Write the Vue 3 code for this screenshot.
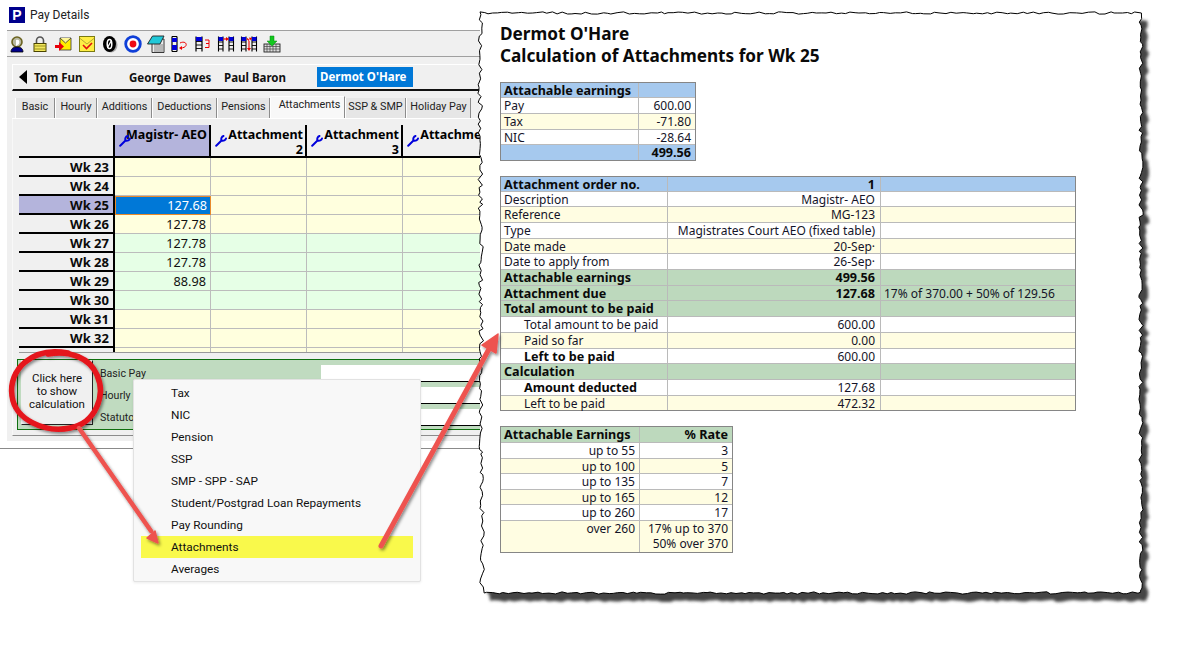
<script setup>
const tabs = ['Basic', 'Hourly', 'Additions', 'Deductions', 'Pensions', 'Attachments', 'SSP & SMP', 'Holiday Pay']
const tabWidths = [40, 42, 55, 65, 53, 75, 61, 65]
const weeks = [
  { w: 'Wk 23', c: 'y', v: '' }, { w: 'Wk 24', c: 'y', v: '' },
  { w: 'Wk 25', c: 'y', v: '127.68', sel: true }, { w: 'Wk 26', c: 'y', v: '127.78' },
  { w: 'Wk 27', c: 'g', v: '127.78' }, { w: 'Wk 28', c: 'g', v: '127.78' },
  { w: 'Wk 29', c: 'g', v: '88.98' }, { w: 'Wk 30', c: 'g', v: '' },
  { w: 'Wk 31', c: 'y', v: '' }, { w: 'Wk 32', c: 'y', v: '' }, { w: '', c: 'y', v: '' }
]
const menu = ['Tax', 'NIC', 'Pension', 'SSP', 'SMP - SPP - SAP', 'Student/Postgrad Loan Repayments', 'Pay Rounding', 'Attachments', 'Averages']

const earn = [
  { k: 'b', a: 'Attachable earnings', b: '', ab: true },
  { k: 'w', a: 'Pay', b: '600.00' },
  { k: 'y', a: 'Tax', b: '-71.80' },
  { k: 'w', a: 'NIC', b: '-28.64' },
  { k: 'b', a: '', b: '499.56', bb: true }
]
const order = [
  { k: 'b', a: 'Attachment order no.', b: '1', c: '', ab: true, bb: true },
  { k: 'w', a: 'Description', b: 'Magistr- AEO', c: '' },
  { k: 'y', a: 'Reference', b: 'MG-123', c: '' },
  { k: 'w', a: 'Type', b: 'Magistrates Court AEO (fixed table)', c: '' },
  { k: 'y', a: 'Date made', b: '20-Sep·', c: '' },
  { k: 'w', a: 'Date to apply from', b: '26-Sep·', c: '' },
  { k: 'g', a: 'Attachable earnings', b: '499.56', c: '', ab: true, bb: true },
  { k: 'g', a: 'Attachment due', b: '127.68', c: '17% of 370.00 + 50% of 129.56', ab: true, bb: true },
  { k: 'g', a: 'Total amount to be paid', b: '', c: '', ab: true },
  { k: 'w', a: 'Total amount to be paid', b: '600.00', c: '', ind: true },
  { k: 'y', a: 'Paid so far', b: '0.00', c: '', ind: true },
  { k: 'w', a: 'Left to be paid', b: '600.00', c: '', ind: true, ab: true },
  { k: 'g', a: 'Calculation', b: '', c: '', ab: true },
  { k: 'w', a: 'Amount deducted', b: '127.68', c: '', ind: true, ab: true },
  { k: 'y', a: 'Left to be paid', b: '472.32', c: '', ind: true }
]
const rates = [
  { k: 'w', a: 'up to 55', b: '3' }, { k: 'y', a: 'up to 100', b: '5' },
  { k: 'w', a: 'up to 135', b: '7' }, { k: 'y', a: 'up to 165', b: '12' },
  { k: 'w', a: 'up to 260', b: '17' }
]

// torn-paper outline of the report sheet
let seed = 11
const rnd = () => { seed = (seed * 16807) % 2147483647; return seed / 2147483647 }
function edge(x0, y0, x1, y1, amp, minStep, pts) {
  const len = Math.hypot(x1 - x0, y1 - y0)
  const ux = (x1 - x0) / len, uy = (y1 - y0) / len
  let d = 0
  while (d < len) {
    const o = (rnd() - 0.5) * amp * 2
    pts.push([x0 + ux * d - uy * o, y0 + uy * d + ux * o])
    d += minStep + rnd() * 4
  }
}
const pts = []
edge(10, 8, 671, 8, 1.1, 3, pts)
edge(671, 8, 671, 588, 2.2, 2, pts)
edge(671, 588, 12, 588, 1.2, 3, pts)
edge(12, 588, 10, 8, 2.4, 2, pts)
const tornPath = 'M' + pts.map(p => p[0].toFixed(1) + ' ' + p[1].toFixed(1)).join('L') + 'Z'
</script>

<template>
  <div class="stage">
    <section class="win">
      <header class="title">
        <span class="app-logo">P</span>
        <span>Pay Details</span>
      </header>

      <div class="toolbar">
        <svg class="tb" viewBox="0 0 18 18"><circle cx="9" cy="7" r="5" fill="#b8b8a0" stroke="#6b6320" stroke-width="1.6"/><path d="M8 5c3-1 4 1 3 4l-3 2z" fill="#fff"/><path d="M3 17c0-4 3-5 6-5s6 1 6 5z" fill="#00008c" stroke="#000" stroke-width=".8"/></svg>
        <svg class="tb" viewBox="0 0 18 18"><path d="M5.500 9V5.500a3.500 3.500 0 0 1 7 0V9" fill="none" stroke="#555" stroke-width="1.6"/><rect x="3" y="8.500" width="12" height="8" fill="#f2e85c" stroke="#4a4400"/><path d="M3 11h12M3 14h12" stroke="#9a9020"/></svg>
        <svg class="tb" viewBox="0 0 18 18"><path d="M6 3h11v12H6z" fill="#ffee00" stroke="#333" stroke-width=".8"/><path d="M6 3l5.500 5L17 3" fill="#fff799" stroke="#333" stroke-width=".8"/><path d="M1 10h4V7l5 4.500-5 4.500v-3H1z" fill="#e8000a"/></svg>
        <svg class="tb" viewBox="0 0 18 18"><rect x="1.500" y="1.500" width="15" height="15" fill="#ffee44" stroke="#7a7a10" stroke-width="1"/><path d="M1.500 3l7.500 6 7.500-6" fill="none" stroke="#b0a030" stroke-width=".9"/><path d="M5 10l3.500 3.500L14 8" fill="none" stroke="#e01010" stroke-width="1.600"/></svg>
        <svg class="tb" viewBox="0 0 18 18"><ellipse cx="10" cy="10" rx="6.500" ry="7.500" fill="#aaa"/><ellipse cx="8.500" cy="9" rx="6.500" ry="8" fill="#000"/><ellipse cx="8.500" cy="9" rx="2.300" ry="4.600" fill="none" stroke="#fff" stroke-width="1.500"/><path d="M6.500 12.500l4-7" stroke="#fff" stroke-width="1.300"/></svg>
        <svg class="tb" viewBox="0 0 18 18"><circle cx="9" cy="9" r="7.300" fill="#fff" stroke="#0f3fd8" stroke-width="2.800"/><circle cx="9" cy="9" r="3.400" fill="#ee0a14"/></svg>
        <svg class="tb" viewBox="0 0 18 18"><path d="M5 4h12v13.500H5z" fill="#eee" stroke="#222" stroke-width=".9"/><path d="M7 10h9M7 12h9M7 14h9M7 16h9" stroke="#666" stroke-width=".8"/><path d="M5.500 1h11.500l-4 8H.5z" fill="#20c8d8" stroke="#222" stroke-width=".9"/></svg>
        <svg class="tb" viewBox="0 0 18 18"><path d="M2 1.500v15M7 1.500v15" stroke="#000" stroke-width="1.200"/><path d="M2 1.500h5M2 16.500h5" stroke="#000"/><path d="M2 3h5v4H2zM2 10h5v5H2z" fill="#0000d8"/><path d="M10 8c4-2 7 0 6 2.500-.5 1.500-3 2.500-5 2.500" fill="none" stroke="#e00" stroke-width="1"/><path d="M9 13l3-2v4z" fill="#e00"/></svg>
        <svg class="tb" viewBox="0 0 18 18"><path d="M2 1.500v15M8 1.500v15" stroke="#000" stroke-width="1.200"/><path d="M2 6.500h6M2 10h6M2 13.500h6" stroke="#000" stroke-width=".9"/><path d="M2 2h6v4H2z" fill="#0000d8"/><path d="M11 5h4v3.500h-3M12 8.500h3v4h-4" fill="none" stroke="#e00" stroke-width="1"/></svg>
        <svg class="tb" viewBox="0 0 18 18"><path d="M1.500 1.500v15M6 1.500v15M12 1.500v15M16.500 1.500v15" stroke="#000" stroke-width="1.100"/><path d="M1.500 7h4.500M1.500 10.500h4.500M1.500 14h4.500M12 7h4.500M12 10.500h4.500M12 14h4.500" stroke="#000" stroke-width=".9"/><path d="M1.500 2h4.500v4H1.500zM12 2h4.500v4H12z" fill="#0000d8"/><path d="M6.500 4H10" stroke="#e00" stroke-width="1.200"/><path d="M12 4L9 2v4z" fill="#e00"/></svg>
        <svg class="tb" viewBox="0 0 18 18"><path d="M1.500 1.500v15M6 1.500v15M12 1.500v15M16.500 1.500v15" stroke="#000" stroke-width="1.100"/><path d="M1.500 7h4.500M1.500 10.500h4.500M1.500 14h4.500M12 7h4.500M12 10.500h4.500M12 14h4.500" stroke="#000" stroke-width=".9"/><path d="M1.500 2h4.500v4H1.500zM12 2h4.500v4H12z" fill="#0000d8"/><path d="M7 3.500l2 2M9 6v8" stroke="#e00" stroke-width="1.100"/><path d="M9 16l-2-3h4zM12 3L9 2.500l1 3z" fill="#e00"/></svg>
        <svg class="tb" viewBox="0 0 18 18"><rect x="1" y="9" width="16" height="8" fill="#ddd" stroke="#222" stroke-width=".9"/><path d="M1 11.500h16M1 14h16M4 9v8M7 9v8M10 9v8M13 9v8" stroke="#444" stroke-width=".7"/><path d="M7 1h4v5h3l-5 5-5-5h3z" fill="#12c81e" stroke="#0a8a10" stroke-width=".5"/></svg>
      </div>

      <div class="body">
        <nav class="people">
          <span class="back"></span>
          <span class="person p1">Tom Fun</span>
          <span class="person p2">George Dawes</span>
          <span class="person p3">Paul Baron</span>
          <span class="person current">Dermot O'Hare</span>
        </nav>

        <div class="tabs">
          <span
            v-for="(t, i) in tabs"
            :key="t"
            class="tab"
            :class="{ active: t === 'Attachments' }"
            :style="{ width: tabWidths[i] + 'px' }"
          >{{ t }}</span>
        </div>

        <div class="panel">
          <div class="grid">
            <div class="row head">
              <div class="lab"></div>
              <div class="hc sel-head"><svg class="wrench" viewBox="0 0 12 12"><path d="M1.200 10.800L6.500 5.500M6.500 5.500C5.800 3.500 6.800 1.500 8.500 1M6.500 5.500C8.500 6.200 10.500 5.200 11 3.500" fill="none" stroke="#0000dc" stroke-width="2" stroke-linecap="round"/></svg><span>Magistr- AEO</span></div>
              <div class="hc" v-for="n in [2, 3, 4]" :key="n"><svg class="wrench" viewBox="0 0 12 12"><path d="M1.200 10.800L6.500 5.500M6.500 5.500C5.800 3.500 6.800 1.500 8.500 1M6.500 5.500C8.500 6.200 10.500 5.200 11 3.500" fill="none" stroke="#0000dc" stroke-width="2" stroke-linecap="round"/></svg><span>Attachment<br>{{ n }}</span></div>
            </div>
            <div class="row" v-for="r in weeks" :key="r.w">
              <div class="lab" :class="{ 'lab-sel': r.sel }">{{ r.w }}</div>
              <div class="cell" :class="[r.c, { selected: r.sel }]">{{ r.v }}</div>
              <div class="cell" :class="r.c" v-for="n in 3" :key="n"></div>
            </div>
          </div>

          <div class="totals">
            <button class="calc">Click here<br>to show<br>calculation</button>
            <div class="tot-rows">
              <div class="tot-row"><span>Basic Pay</span><i></i></div>
              <div class="tot-row"><span>Hourly pay</span><i></i></div>
              <div class="tot-row"><span>Statutory pay</span><i></i></div>
            </div>
          </div>
        </div>
      </div>
    </section>

    <ul class="menu">
      <li v-for="m in menu" :key="m" :class="{ hot: m === 'Attachments' }">{{ m }}</li>
    </ul>

    <article class="paper">
      <svg class="torn" viewBox="0 0 690 610">
        <defs><filter id="blur" x="-5%" y="-5%" width="110%" height="110%"><feGaussianBlur stdDeviation="1.600"/></filter></defs>
        <path :d="tornPath" fill="#444" filter="url(#blur)" transform="translate(6 8)"/>
        <path :d="tornPath" fill="#fff" stroke="#000" stroke-width="1"/>
      </svg>
      <div class="sheet">
        <h1>Dermot O'Hare<br>Calculation of Attachments for Wk 25</h1>

        <div class="rep rep1">
          <template v-for="(r, i) in earn" :key="i">
            <div class="rc" :class="[r.k, { bold: r.ab }]">{{ r.a }}</div>
            <div class="rc num" :class="[r.k, { bold: r.bb }]">{{ r.b }}</div>
          </template>
        </div>

        <div class="rep rep2">
          <template v-for="(r, i) in order" :key="i">
            <div class="rc" :class="[r.k, { bold: r.ab, ind: r.ind }]">{{ r.a }}</div>
            <div class="rc num" :class="[r.k, { bold: r.bb }]">{{ r.b }}</div>
            <div class="rc" :class="r.k">{{ r.c }}</div>
          </template>
        </div>

        <div class="rep rep3">
          <div class="rc g bold">Attachable Earnings</div>
          <div class="rc g bold num">% Rate</div>
          <template v-for="r in rates" :key="r.a">
            <div class="rc num" :class="r.k">{{ r.a }}</div>
            <div class="rc num" :class="r.k">{{ r.b }}</div>
          </template>
          <div class="rc num y">over 260</div>
          <div class="rc num y">17% up to 370<br>50% over 370</div>
        </div>
      </div>
    </article>

    <svg class="marks" viewBox="0 0 1189 653">
      <defs>
        <filter id="sh" x="-20%" y="-20%" width="140%" height="140%"><feDropShadow dx="1.500" dy="2" stdDeviation="1.500" flood-color="#000" flood-opacity=".45"/></filter>
      </defs>
      <g filter="url(#sh)">
        <path d="M68 353C32 346 8 370 12 396C15 420 45 433 70 428C96 423 106 395 97 375C90 358 70 350 48 354" fill="none" stroke="#e5141c" stroke-width="5.500" stroke-linecap="round"/>
        <path d="M79 428L151 531" stroke="#ee5350" stroke-width="4.500" stroke-linecap="round"/>
        <path d="M158 543L147 538L155 531Z" fill="#ee5350" stroke="#ee5350" stroke-width="1.500" stroke-linejoin="round"/>
        <path d="M381 546L489 349" stroke="#ee5350" stroke-width="5" stroke-linecap="round"/>
        <path d="M498 334L482 345L496 353Z" fill="#ee5350" stroke="#ee5350" stroke-width="1.500" stroke-linejoin="round"/>
      </g>
    </svg>
  </div>
</template>

<style scoped>
.stage { position: relative; width: 1189px; height: 653px; overflow: hidden; background: #fff; font-family: "Noto Sans", sans-serif; color: #000; }

.win { width: 480px; height: 449px; overflow: hidden; border-bottom: 1px solid #8a8a8a; box-sizing: border-box; }
.title { height: 30px; display: flex; align-items: center; gap: 5px; padding-left: 9px; font: 12px Roboto, sans-serif; color: #222; padding-bottom: 1px; box-sizing: border-box; }
.app-logo { width: 16px; height: 16px; background: #00008c; color: #fff; font: bold 14px/16px "Liberation Sans", sans-serif; text-align: center; }
.toolbar { margin-left: 7px; height: 27px; box-sizing: border-box; background: #f0f0f0; border-top: 1px solid #a0a0a0; border-bottom: 1px solid #a0a0a0; display: flex; align-items: center; gap: 5.2px; padding-left: 1px; }
.tb { width: 18px; height: 18px; flex: none; }

.body { margin-left: 7px; height: 384px; background: #f0f0f0; padding: 7px 0 0 5px; box-sizing: border-box; }
.people { height: 27px; box-sizing: border-box; border-top: 1px solid #fff; border-left: 1px solid #fff; border-bottom: 2px solid #111; display: flex; align-items: center; font-weight: 700; font-size: 11.500px; color: #111; }
.back { width: 0; height: 0; border: 7px solid transparent; border-right: 8px solid #000; border-left: 0; margin-left: 6px; }
.person { flex: none; }
.p1 { margin-left: 7px; width: 95px; }
.p2 { width: 95px; }
.p3 { width: 93px; }
.current { background: #0078d7; color: #fff; width: 96px; height: 20px; line-height: 20px; padding-left: 3px; box-sizing: border-box; }

.tabs { display: flex; align-items: flex-end; height: 28px; padding-left: 3px; box-sizing: border-box; border-bottom: 1px solid #fff; }
.tab { height: 20px; box-sizing: border-box; background: #e6e6e6; border-right: 1px solid #8c8c8c; border-left: 1px solid #fff; font: 10.800px/18px Roboto, sans-serif; text-align: center; color: #222; white-space: nowrap; }
.tab.active { height: 22px; background: #f8f8f8; border-top: 1px solid #fff; line-height: 16px; padding-left: 4px; }

.panel { height: 317px; box-sizing: border-box; padding: 6px 0 0 5px; border-bottom: 1px solid #8c8c8c; border-left: 1px solid #f8f8f8; }
.grid { margin-left: 1px; height: 228px; overflow: hidden; border-bottom: 1px solid #999; box-sizing: border-box; width: 470px; }
.row { display: flex; height: 19px; }
.row.head { height: 33px; }
.lab { flex: none; width: 96px; box-sizing: border-box; background: #f0f0f0; border-right: 2px solid #000; border-bottom: 2px solid #000; text-align: right; padding-right: 4px; font-weight: 700; font-size: 13px; line-height: 18px; color: #0b0b0b; }
.lab-sel { background: #b4b4dc; }
.hc { flex: none; width: 96px; box-sizing: border-box; background: #f0f0f0; border-right: 2px solid #000; border-bottom: 2px solid #000; position: relative; text-align: right; padding: 2px 2px 0 0; font-weight: 700; font-size: 12.500px; line-height: 15px; white-space: nowrap; }
.sel-head { background: #b4b4dc; }
.wrench { position: absolute; left: 4px; top: 10px; width: 12px; height: 12px; }
.cell { flex: none; width: 96px; box-sizing: border-box; border-right: 1px solid #bcbcbc; border-bottom: 1px solid #bcbcbc; font-size: 12.700px; line-height: 18px; text-align: right; padding-right: 4px; color: #111; }
.cell.y { background: #ffffde; }
.cell.g { background: #e6ffe6; }
.cell.selected { background: #0078d7; color: #fff; border: 1px solid #e88a2c; line-height: 16px; padding-right: 3px; }

.totals { margin-top: 6px; height: 71px; box-sizing: border-box; width: 470px; margin-left: -1px; background: #c0dbc0; border: 1px solid #0f6f0f; display: flex; }
.calc { flex: none; width: 72px; height: 65px; margin-left: 3px; background: #f0f0f0; border: 1px solid #222; border-top-color: #f0f0f0; border-left-color: #f0f0f0; padding: 0 0 2px; font: 11.500px/13px Roboto, sans-serif; color: #111; }
.tot-rows { flex: 1; padding: 5px 0 0 7px; display: flex; flex-direction: column; gap: 4px; }
.tot-row { height: 18px; display: flex; justify-content: space-between; font: 10.600px/17px Roboto, sans-serif; color: #222; }
.tot-row i { width: 165px; background: #fff; border-bottom: 1px solid #000; height: 16px; }

.menu { position: absolute; left: 133px; top: 379px; width: 288px; height: 203px; box-sizing: border-box; margin: 0; padding: 2px 0 0; list-style: none; background: #f8f8f8; border: 1px solid #e2e2e2; border-radius: 2px; box-shadow: 0 1px 3px rgba(0, 0, 0, .08); font: 11.800px Roboto, sans-serif; color: #111; }
.menu li { height: 22px; line-height: 22px; padding-left: 37px; }
.menu li.hot { background: #f9f94b; margin: 0 7px; padding-left: 30px; }

.paper { position: absolute; left: 470px; top: 5px; width: 690px; height: 610px; }
.torn { position: absolute; left: 0; top: 0; width: 690px; height: 610px; }
.sheet { position: relative; padding: 18px 0 0 30px; }
h1 { margin: 0; font-size: 17.200px; line-height: 22px; font-weight: 700; color: #0a0a0a; }

.rep { display: grid; background: #bababa; gap: 1px; border: 1px solid #868686; font-size: 12px; color: #141428; width: max-content; }
.rep1 { margin-top: 15px; grid-template-columns: 137px 56px; grid-template-rows: 14px 15px 15px 14px 15px; }
.rep2 { margin-top: 15px; grid-template-columns: 166px 212px 194px; grid-template-rows: 14px 14px 15px 15px 14px 15px 15px 14px 15px 15px 15px 14px 15px 15px 14px; }
.rep2 .num { padding-right: 5px; }
.rep3 { margin-top: 15px; grid-template-columns: 138px 92px; grid-template-rows: 15px 15px 14px 15px 14px 15px 31px; }
.rc { padding: 0 4px 0 3px; line-height: 15px; white-space: nowrap; }
.rc.num { text-align: right; }
.rc.bold { font-weight: 700; font-size: 12.600px; line-height: 15px; color: #0a0a0a; }
.rc.ind { padding-left: 23px; }
.rc.b { background: #a6c9ee; }
.rc.w { background: #fff; }
.rc.y { background: #fffde2; }
.rc.g { background: #bdd9bd; }

.marks { position: absolute; left: 0; top: 0; width: 1189px; height: 653px; pointer-events: none; }
</style>
